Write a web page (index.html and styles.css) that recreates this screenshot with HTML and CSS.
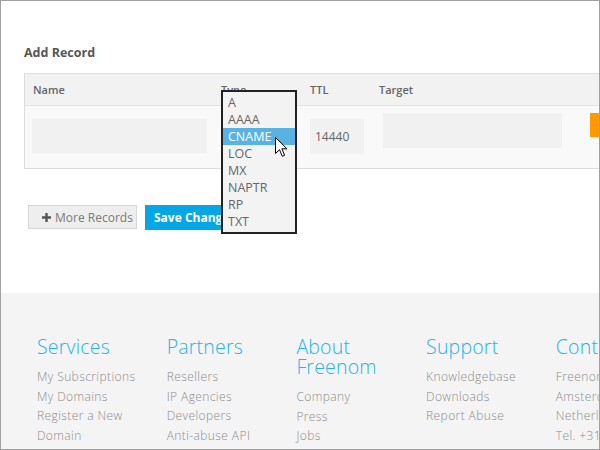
FILE: index.html
```html
<!DOCTYPE html>
<html>
<head>
<meta charset="utf-8">
<link rel="stylesheet" href="styles.css">
</head>
<body>
<div class="frame">
  <main class="main">
    <h2 class="title">Add Record</h2>
    <div class="records">
      <div class="row head">
        <div class="c c-name">Name</div>
        <div class="c c-type">Type</div>
        <div class="c c-ttl">TTL</div>
        <div class="c c-target">Target</div>
      </div>
      <div class="row body">
        <div class="c c-name"><div class="field f-name"></div></div>
        <div class="c c-type"></div>
        <div class="c c-ttl"><div class="field f-ttl">14440</div></div>
        <div class="c c-target"><div class="field f-target"></div></div>
        <div class="c c-act"><div class="btn-orange"></div></div>
      </div>
      <ul class="dropdown">
        <li>A</li>
        <li>AAAA</li>
        <li class="sel">CNAME</li>
        <li>LOC</li>
        <li>MX</li>
        <li>NAPTR</li>
        <li>RP</li>
        <li>TXT</li>
      </ul>
      <svg class="cursor" width="13" height="21" viewBox="0 0 13 21"><path d="M0.5 0.5 L0.5 16.5 L4.5 12.7 L7.3 19.3 L9.6 18.3 L6.9 11.8 L12 11.8 Z" fill="#fff" stroke="#000" stroke-width="1" stroke-linejoin="miter"/></svg>
    </div>
    <div class="actions">
      <button class="btn btn-more"><svg class="plus" width="9" height="9" viewBox="0 0 9 9"><path d="M3.3 0h2.4v3.3H9v2.4H5.7V9H3.3V5.7H0V3.3h3.3z" fill="#555"/></svg>More Records</button>
      <button class="btn btn-save">Save Changes</button>
    </div>
  </main>
  <footer class="footer">
    <div class="col">
      <h3>Services</h3>
      <ul>
        <li>My Subscriptions</li>
        <li>My Domains</li>
        <li>Register a New Domain</li>
      </ul>
    </div>
    <div class="col">
      <h3>Partners</h3>
      <ul>
        <li>Resellers</li>
        <li>IP Agencies</li>
        <li>Developers</li>
        <li>Anti-abuse API</li>
      </ul>
    </div>
    <div class="col">
      <h3>About Freenom</h3>
      <ul>
        <li>Company</li>
        <li>Press</li>
        <li>Jobs</li>
      </ul>
    </div>
    <div class="col">
      <h3>Support</h3>
      <ul>
        <li>Knowledgebase</li>
        <li>Downloads</li>
        <li>Report Abuse</li>
      </ul>
    </div>
    <div class="col col-contact">
      <h3>Contact</h3>
      <ul>
        <li>Freenom</li>
        <li>Amsterdam</li>
        <li>Netherlands</li>
        <li>Tel. +31 20 531 5726</li>
      </ul>
    </div>
  </footer>
</div>
</body>
</html>
```

FILE: styles.css
```css
* { box-sizing: border-box; }
html, body { margin: 0; padding: 0; background: #fff; }
body { font-family: "Open Sans", "Liberation Sans", sans-serif; }

.frame {
  width: 600px;
  height: 450px;
  border: 1px solid #a0a0a0;
  overflow: hidden;
  display: flex;
  flex-direction: column;
  background: #fff;
}

.main {
  padding: 44px 0 63px 23px;
  flex: none;
}

.title {
  margin: 0 0 12px;
  font-size: 12.5px;
  line-height: 16px;
  font-weight: 700;
  color: #555;
}

.records {
  position: relative;
  width: 620px;
  border-top: 1px solid #ddd;
  border-left: 1px solid #ddd;
  border-bottom: 1px solid #ddd;
}

.row { display: flex; }
.head {
  height: 32px;
  background: #f2f2f2;
  border-bottom: 1px solid #e3e3e3;
  font-size: 11px;
  font-weight: 600;
  color: #666;
  line-height: 31px;
}
.head .c { padding-left: 8px; }
.body {
  height: 62px;
  background: #f9f9f9;
}

.c { flex: none; }
.c-name { width: 188px; }
.c-type { width: 89px; }
.c-ttl { width: 69px; }
.c-target { width: 205px; }
.c-act { width: 60px; }

.field { background: #f1f1f1; }
.f-name { margin: 13px 0 0 7px; width: 175px; height: 34px; }
.f-ttl {
  margin: 13px 0 0 8px;
  width: 54px;
  height: 35px;
  padding-left: 5px;
  font-size: 12px;
  line-height: 35px;
  color: #666;
}
.f-target { margin: 7px 0 0 12px; width: 179px; height: 35px; }
.btn-orange { margin: 7px 0 0 14px; width: 30px; height: 24px; background: #ff9900; }

.dropdown {
  position: absolute;
  left: 196px;
  top: 16px;
  width: 76px;
  height: 144px;
  margin: 0;
  padding: 2px 0 0;
  list-style: none;
  background: #f3f3f3;
  border: 2px solid #222;
  z-index: 5;
}
.dropdown li {
  height: 17px;
  line-height: 17px;
  padding-left: 5px;
  font-size: 12.5px;
  color: #666;
}
.dropdown li.sel { background: #58b3e2; color: #fff; }

.cursor {
  position: absolute;
  left: 250px;
  top: 63px;
  z-index: 6;
}

.actions {
  margin: 36px 0 0 4px;
  display: flex;
  gap: 8px;
}
.btn {
  height: 24px;
  font-family: "Open Sans", "Liberation Sans", sans-serif;
  font-size: 12px;
  padding: 0;
  display: flex;
  align-items: center;
}
.btn-more {
  width: 109px;
  background: #eee;
  border: 1px solid #d6d6d6;
  color: #7a7a7a;
  padding-left: 13px;
}
.plus { margin-right: 4px; }
.btn-save {
  height: 25px;
  background: #05a6e4;
  border: none;
  color: #fff;
  font-weight: 700;
  padding: 0 10px 0 9px;
}

.footer {
  flex: 1;
  background: #f4f4f4;
  padding: 44px 0 0 36px;
  display: flex;
  gap: 19.7px;
}
.col { flex: none; width: 110px; }
.col h3 {
  margin: 0 0 10px;
  font-size: 19.5px;
  line-height: 20px;
  font-weight: 300;
  color: #27b2e8;
  letter-spacing: 0.2px;
}
.col ul { margin: 0; padding: 0; list-style: none; }
.col li {
  font-size: 12px;
  line-height: 19.7px;
  font-weight: 300;
  color: #8c8c8c;
  letter-spacing: 0.4px;
}
.col-contact { white-space: nowrap; }
```
